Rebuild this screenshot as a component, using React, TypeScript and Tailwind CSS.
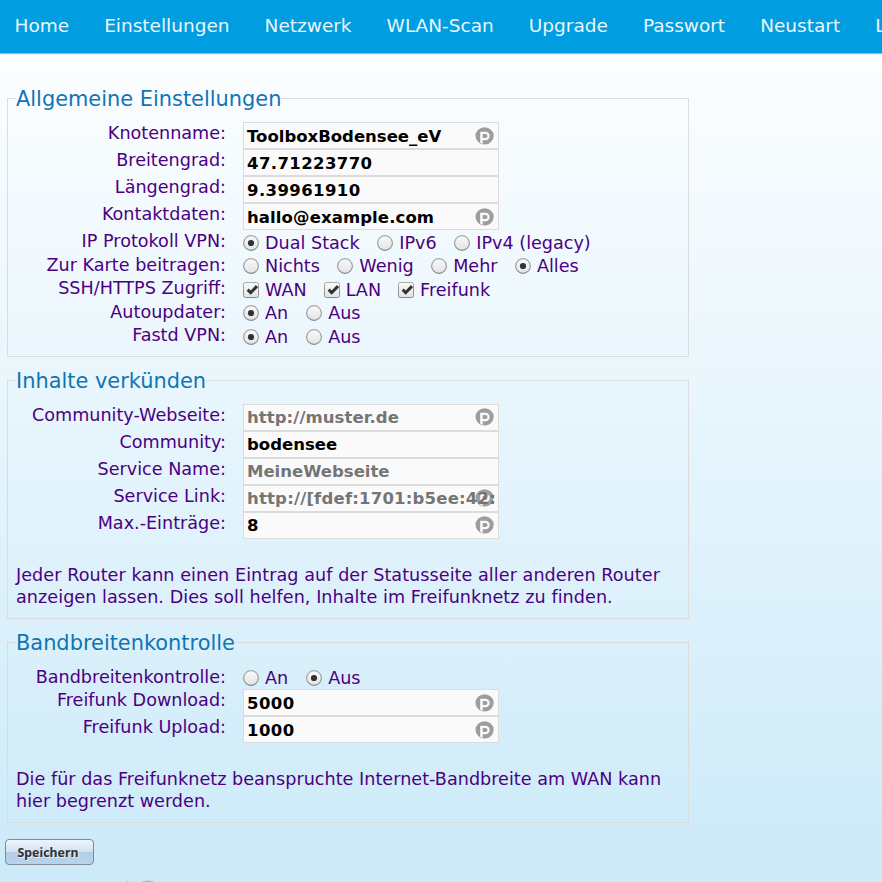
import React from "react";

const sans = "font-['DejaVu_Sans',sans-serif]";

function Radio({ on }: { on?: boolean }) {
  return (
    <svg className="h-4 w-4 shrink-0" viewBox="0 0 16 16">
      <defs>
        <linearGradient id="knob" x1="0" y1="0" x2="0" y2="1">
          <stop offset="0" stopColor="#fafafa" />
          <stop offset="1" stopColor="#e2e3e3" />
        </linearGradient>
        <linearGradient id="rim" x1="0" y1="0" x2="0" y2="1">
          <stop offset="0" stopColor="#a9abab" />
          <stop offset="1" stopColor="#858787" />
        </linearGradient>
      </defs>
      <circle cx="8" cy="8" r="7.4" fill="url(#knob)" stroke="url(#rim)" strokeWidth="1.1" />
      {on && <circle cx="8" cy="8" r="3.1" fill="#2e3436" />}
    </svg>
  );
}

function Check() {
  return (
    <svg className="h-4 w-4 shrink-0" viewBox="0 0 16 16">
      <rect x="0.5" y="0.5" width="15" height="15" rx="2" fill="url(#knob)" stroke="url(#rim)" />
      <path d="M4.7 7.6 L7.7 10.7 L14 4.1" fill="none" stroke="#2e3436" strokeWidth="3" />
    </svg>
  );
}

function Badge({ raised }: { raised?: boolean }) {
  return (
    <svg
      className={`absolute right-[4px] h-[18px] w-[19px] ${raised ? "top-[3px]" : "top-[4px]"}`}
      viewBox="0 0 19 18"
    >
      <path
        fillRule="evenodd"
        fill="#6e6e6e"
        fillOpacity="0.67"
        d="M9.6 0.2 A9.1 8.6 0 0 1 9.6 17.4 A9.1 8.6 0 0 1 9.6 0.2 Z M5.2 4.8 V15.8 L7.7 16.9 V13.2 H10.5 A4.2 4.2 0 0 0 10.5 4.8 Z M7.7 6.9 H10.4 A2.1 2.1 0 0 1 10.4 11.1 H7.7 Z"
      />
    </svg>
  );
}

function Row({ label, h, children }: { label: string; h: string; children: React.ReactNode }) {
  return (
    <div className={`flex ${h}`}>
      <div className="w-[210px] shrink-0 text-right leading-[22px] whitespace-nowrap">{label}</div>
      <div className="ml-[17px] flex">{children}</div>
    </div>
  );
}

type FieldProps = {
  label: string;
  value?: string;
  hint?: string;
  badge?: boolean;
  raised?: boolean;
  spacing?: string;
};

function Field({ label, value, hint, badge, raised, spacing = "tracking-[0px]" }: FieldProps) {
  return (
    <Row label={label} h="h-[27px]">
      <div
        className={`relative h-[27px] w-[256px] overflow-hidden border border-[#dcdcdc] bg-[#fafafa] pl-[3px] text-[16.5px] font-bold whitespace-nowrap ${spacing} ${raised ? "leading-[25px]" : "leading-[27px]"}`}
      >
        <span className={value ? "text-black" : "text-[#757575]"}>{value || hint}</span>
        {badge && <Badge raised={raised} />}
      </div>
    </Row>
  );
}

type OptionsProps = {
  label: string;
  h: string;
  items: string[];
  on?: number;
  check?: boolean;
  raised?: boolean;
  gap?: string;
};

function Options({ label, h, items, on, check, raised, gap = "gap-[18px]" }: OptionsProps) {
  return (
    <Row label={label} h={h}>
      <div className={`flex items-center whitespace-nowrap ${gap} ${raised ? "h-[24px]" : "h-[26px]"}`}>
        {items.map((t, i) => (
          <label key={t} className="flex items-center gap-[6px]">
            {check ? <Check /> : <Radio on={i === on} />}
            <span>{t}</span>
          </label>
        ))}
      </div>
    </Row>
  );
}

function Group({ title, className, children }: { title: string; className: string; children: React.ReactNode }) {
  return (
    <fieldset className={`ml-[7px] w-[682px] border border-[#dcdcdc] px-[8px] ${className}`}>
      <legend className="h-[24px] text-[20.9px] leading-[26px] text-[#0f75b5]">{title}</legend>
      <div className="pt-[12px]">{children}</div>
    </fieldset>
  );
}

const nav = ["Home", "Einstellungen", "Netzwerk", "WLAN-Scan", "Upgrade", "Passwort", "Neustart", "Logout"];

export default function App() {
  return (
    <div
      className={`${sans} h-[882px] w-[882px] overflow-hidden bg-linear-to-b from-[#ffffff] to-[#cceaf9] text-[17.6px] text-[#4b0082]`}
    >
      <nav className="flex h-[53px] gap-[35px] bg-[#009ee0] pl-[14.5px] text-[18.5px] leading-[51px] whitespace-nowrap text-[#eaf6fc] shadow-[0_1px_1px_#a5b5bd]">
        {nav.map((t) => (
          <span key={t}>{t}</span>
        ))}
      </nav>
      <Group title="Allgemeine Einstellungen" className="mt-[33px] h-[271px]">
        <Field label="Knotenname:" value="ToolboxBodensee_eV" badge />
        <Field label="Breitengrad:" value="47.71223770" spacing="tracking-[0.4px]" />
        <Field label="Längengrad:" value="9.39961910" spacing="tracking-[0.4px]" />
        <Field label="Kontaktdaten:" value="hallo@example.com" spacing="tracking-[0.1px]" badge />
        <Options label="IP Protokoll VPN:" h="h-[24px]" items={["Dual Stack", "IPv6", "IPv4 (legacy)"]} on={0} gap="gap-[17.6px]" />
        <Options label="Zur Karte beitragen:" h="h-[23px]" items={["Nichts", "Wenig", "Mehr", "Alles"]} on={3} gap="gap-[17.4px]" raised />
        <Options label="SSH/HTTPS Zugriff:" h="h-[24px]" items={["WAN", "LAN", "Freifunk"]} gap="gap-[17px]" check />
        <Options label="Autoupdater:" h="h-[23px]" items={["An", "Aus"]} on={0} raised />
        <Options label="Fastd VPN:" h="h-[24px]" items={["An", "Aus"]} on={0} />
      </Group>
      <Group title="Inhalte verkünden" className="mt-[11px] h-[251px]">
        <Field label="Community-Webseite:" hint="http://muster.de" spacing="tracking-[0.07px]" badge raised />
        <Field label="Community:" value="bodensee" raised />
        <Field label="Service Name:" hint="MeineWebseite" raised />
        <Field label="Service Link:" hint="http://[fdef:1701:b5ee:42:" spacing="tracking-[0.2px]" badge raised />
        <Field label="Max.-Einträge:" value="8" badge raised />
        <p className="mt-[25px] leading-[22px] tracking-[0.052px] whitespace-nowrap">
          Jeder Router kann einen Eintrag auf der Statusseite aller anderen Router
          <br />
          anzeigen lassen. Dies soll helfen, Inhalte im Freifunknetz zu finden.
        </p>
      </Group>
      <Group title="Bandbreitenkontrolle" className="mt-[11px] h-[193px]">
        <Options label="Bandbreitenkontrolle:" h="h-[23px]" items={["An", "Aus"]} on={1} raised />
        <Field label="Freifunk Download:" value="5000" spacing="tracking-[0.4px]" badge />
        <Field label="Freifunk Upload:" value="1000" spacing="tracking-[0.4px]" badge />
        <p className="mt-[25px] leading-[22px] tracking-[0.02px] whitespace-nowrap">
          Die für das Freifunknetz beanspruchte Internet-Bandbreite am WAN kann
          <br />
          hier begrenzt werden.
        </p>
      </Group>
      <button className="mt-[16px] ml-[5px] block h-[26px] w-[89px] rounded-[4px] border border-[#7f8a94] bg-[linear-gradient(#edf5fc_0%,#d3e2f2_48%,#b4cde6_52%,#b9d3ea_100%)] pr-[3px] font-['Noto_Sans',sans-serif] text-[12.4px] leading-[26px] font-bold text-[#333] text-shadow-[1px_1px_0_#e8f1fa]">
        Speichern
      </button>
      <svg className="mt-[15px] ml-[120px] block h-[2px] w-[40px]" viewBox="0 0 40 2">
        <ellipse cx="28" cy="7" rx="11" ry="6.6" fill="#b9b9bd" />
        <path d="M6 2 L8 0.8 L9 2 Z" fill="#b9b9bd" />
      </svg>
    </div>
  );
}
